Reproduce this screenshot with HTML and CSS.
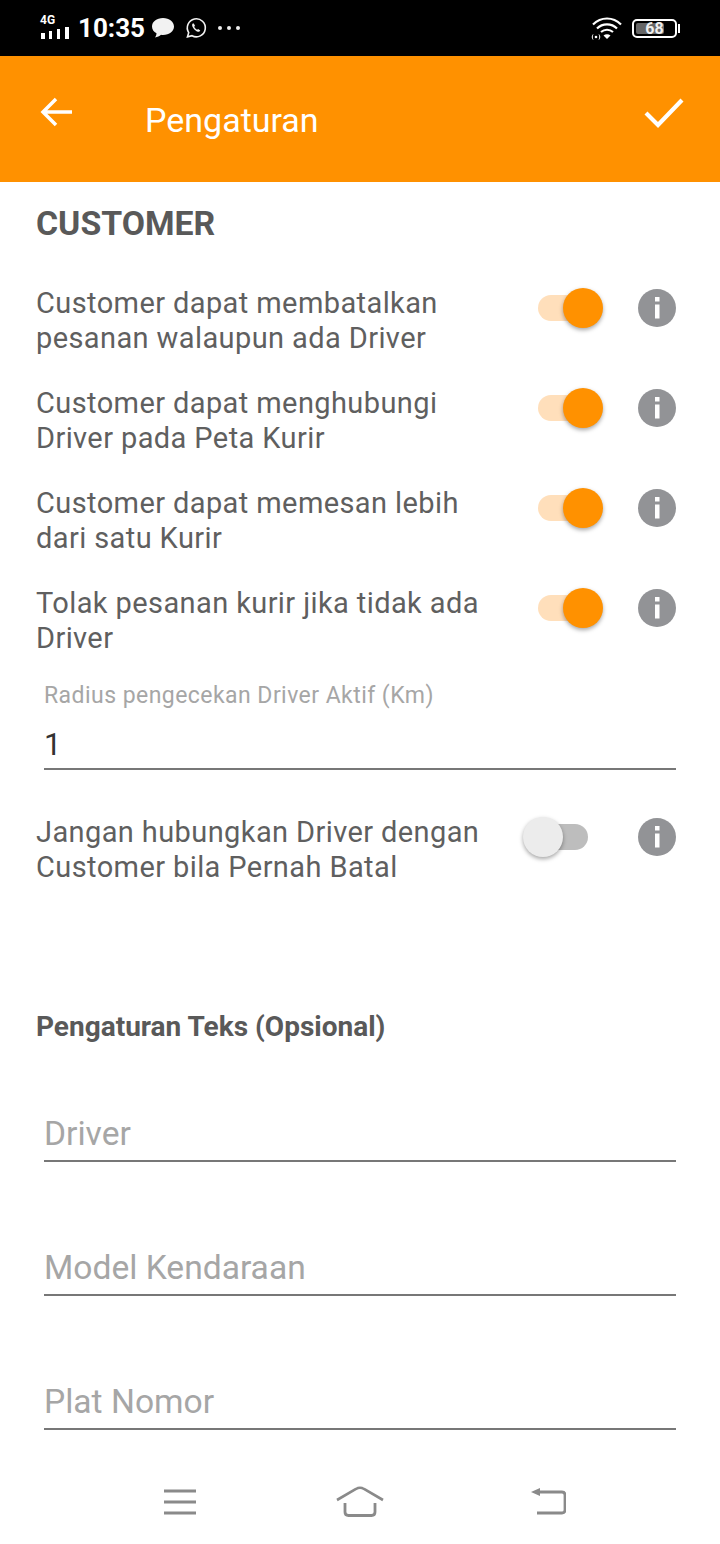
FILE: index.html
```html
<!DOCTYPE html>
<html lang="en">
<head>
    <meta charset="UTF-8">
    <meta name="viewport" content="width=device-width, initial-scale=1.0">
    <title>Pengaturan</title>
    <link rel="stylesheet" href="styles.css">
</head>
<body>
    <div class="status-bar">
        <div class="status-left">
            <div class="signal">
                <span class="signal-label">4G</span>
                <svg width="30" height="14" viewBox="0 0 30 14"><rect x="1" y="7" width="4" height="6" fill="#fff"/><rect x="9" y="5" width="3" height="8" fill="#fff"/><rect x="17" y="3" width="3" height="10" fill="#fff"/><rect x="25" y="1" width="4" height="12" fill="#fff"/></svg>
            </div>
            <span class="clock">10:35</span>
            <svg width="24" height="24" viewBox="0 0 24 24"><path d="M12 2C5.600 2 1 5.600 1 10.500c0 3 1.700 5.300 4.500 6.800 0 1.500-.6 3-1.500 4.200 2.400-.3 4.500-1.300 6-2.700.7.100 1.300.2 2 .2 6.400 0 11-3.800 11-8.500S18.400 2 12 2z" fill="#f2f2f2"/></svg>
            <svg class="wa" width="22" height="22" viewBox="0 0 22 22"><path d="M2.500 19.800l1.200-4.200A9 9 0 1 1 7 18.700z" fill="none" stroke="#f2f2f2" stroke-width="1.600"/><path d="M7.800 6.500c-1 .9-.9 2.400.3 4.300 1.300 2 3 3.500 4.700 3.900 1.100.2 2-.3 2.500-1.300l-2.200-1.400-1 .8c-1.200-.5-2.300-1.700-2.900-3l.8-1-1.200-2.400z" fill="#f2f2f2"/></svg>
            <div class="dots"><i></i><i></i><i></i></div>
        </div>
        <div class="status-right">
            <svg width="34" height="26" viewBox="0 0 34 26"><path d="M3 9.500C11 1.500 23 1.500 31 9.500M7 13.500c5.500-5.500 14.500-5.500 20 0M11 17c3.500-3 8.500-3 12 0" fill="none" stroke="#fff" stroke-width="2.200"/><path d="M13.500 20.500c2-1.600 5-1.600 7 0L17 24z" fill="#fff"/><circle cx="6" cy="22" r="1.300" fill="#fff"/><path d="M3 19.500c-1 1.500-1 3.500 0 5M9 19.500c1 1.500 1 3.500 0 5" fill="none" stroke="#fff" stroke-width="1"/></svg>
            <div class="battery">
                <div class="battery-body"><div class="battery-fill"></div><span class="battery-text">68</span></div>
                <div class="battery-cap"></div>
            </div>
        </div>
    </div>

    <div class="toolbar">
        <svg class="back-icon" width="34" height="34" viewBox="0 0 34 34"><path d="M32 17H3M16 4L3 17l13 13" fill="none" stroke="#fff" stroke-width="3.500"/></svg>
        <h1 class="toolbar-title">Pengaturan</h1>
        <svg class="check-icon" width="40" height="32" viewBox="0 0 40 32"><path d="M2 16l12 12L38 3" fill="none" stroke="#fff" stroke-width="4.200"/></svg>
    </div>

    <div class="content">
        <h2 class="section-title">CUSTOMER</h2>

        <div class="setting-row">
            <div class="setting-text">Customer dapat membatalkan pesanan walaupun ada Driver</div>
            <div class="switch on"><div class="knob"></div></div>
            <div class="info"><svg width="38" height="38" viewBox="0 0 38 38"><circle cx="19" cy="19" r="19" fill="#929396"/><rect x="17" y="8" width="4.500" height="4.500" fill="#fff"/><rect x="17" y="15.500" width="4.500" height="14" fill="#fff"/></svg></div>
        </div>
        <div class="setting-row">
            <div class="setting-text">Customer dapat menghubungi Driver pada Peta Kurir</div>
            <div class="switch on"><div class="knob"></div></div>
            <div class="info"><svg width="38" height="38" viewBox="0 0 38 38"><circle cx="19" cy="19" r="19" fill="#929396"/><rect x="17" y="8" width="4.500" height="4.500" fill="#fff"/><rect x="17" y="15.500" width="4.500" height="14" fill="#fff"/></svg></div>
        </div>
        <div class="setting-row">
            <div class="setting-text">Customer dapat memesan lebih dari satu Kurir</div>
            <div class="switch on"><div class="knob"></div></div>
            <div class="info"><svg width="38" height="38" viewBox="0 0 38 38"><circle cx="19" cy="19" r="19" fill="#929396"/><rect x="17" y="8" width="4.500" height="4.500" fill="#fff"/><rect x="17" y="15.500" width="4.500" height="14" fill="#fff"/></svg></div>
        </div>
        <div class="setting-row last">
            <div class="setting-text">Tolak pesanan kurir jika tidak ada Driver</div>
            <div class="switch on"><div class="knob"></div></div>
            <div class="info"><svg width="38" height="38" viewBox="0 0 38 38"><circle cx="19" cy="19" r="19" fill="#929396"/><rect x="17" y="8" width="4.500" height="4.500" fill="#fff"/><rect x="17" y="15.500" width="4.500" height="14" fill="#fff"/></svg></div>
        </div>

        <div class="radius-field">
            <div class="radius-label">Radius pengecekan Driver Aktif (Km)</div>
            <div class="radius-value">1</div>
        </div>

        <div class="setting-row off-row">
            <div class="setting-text">Jangan hubungkan Driver dengan Customer bila Pernah Batal</div>
            <div class="switch off"><div class="knob"></div></div>
            <div class="info"><svg width="38" height="38" viewBox="0 0 38 38"><circle cx="19" cy="19" r="19" fill="#929396"/><rect x="17" y="8" width="4.500" height="4.500" fill="#fff"/><rect x="17" y="15.500" width="4.500" height="14" fill="#fff"/></svg></div>
        </div>

        <h3 class="sub-title">Pengaturan Teks (Opsional)</h3>

        <div class="text-field">Driver</div>
        <div class="text-field">Model Kendaraan</div>
        <div class="text-field">Plat Nomor</div>
    </div>

    <div class="nav-bar">
        <svg class="nav-menu" width="36" height="30" viewBox="0 0 36 30"><path d="M2 4h32M2 15h32M2 26h32" fill="none" stroke="#8a8a8a" stroke-width="2.800"/></svg>
        <svg class="nav-home" width="50" height="32" viewBox="0 0 50 32"><path d="M2 14L21 3q4-2.500 8 0l19 11" fill="none" stroke="#8a8a8a" stroke-width="2.600"/><path d="M10 17v9q0 3.500 3.500 3.500h23q3.500 0 3.500-3.500v-9" fill="none" stroke="#8a8a8a" stroke-width="2.800"/></svg>
        <svg class="nav-back" width="36" height="30" viewBox="0 0 36 30"><path d="M8 6h24q3 0 3 3v15q0 3-3 3H7" fill="none" stroke="#8a8a8a" stroke-width="2.800"/><path d="M1 6l9-4v8z" fill="#8a8a8a"/></svg>
    </div>
</body>
</html>
```

FILE: styles.css
```css
body {
    margin: 0;
    padding: 0;
    width: 720px;
    height: 1544px;
    overflow: hidden;
    background: #fff;
    font-family: 'Roboto', sans-serif;
    color: #5f5f5f;
    position: relative;
}

.status-bar {
    height: 56px;
    background: #000;
    color: #fff;
    display: flex;
    justify-content: space-between;
    align-items: center;
    padding: 0 40px;
    box-sizing: border-box;
}

.status-left {
    display: flex;
    align-items: center;
}

.signal {
    width: 30px;
    display: flex;
    flex-direction: column;
    margin-top: -2px;
}

.signal-label {
    font-size: 12px;
    font-weight: 700;
    line-height: 11px;
}

.clock {
    font-size: 26px;
    font-weight: 700;
    margin: 0 8px 0 8px;
    width: 65px;
}

.wa {
    margin-left: 10px;
}

.dots {
    display: flex;
    gap: 5px;
    margin-left: 11px;
}

.dots i {
    width: 4px;
    height: 4px;
    border-radius: 50%;
    background: #eee;
}

.status-right {
    display: flex;
    align-items: center;
    gap: 8px;
}

.battery {
    display: flex;
    align-items: center;
}

.battery-body {
    width: 37px;
    height: 11px;
    border: 2px solid #fff;
    border-radius: 5px;
    position: relative;
    padding: 2px;
}

.battery-fill {
    width: 75%;
    height: 100%;
    background: #666;
    border-radius: 2px;
}

.battery-text {
    position: absolute;
    left: 0;
    right: 0;
    top: 0;
    text-align: center;
    font-size: 16px;
    font-weight: 700;
    line-height: 15px;
    color: #eee;
}

.battery-cap {
    width: 2px;
    height: 9px;
    background: #fff;
    margin-left: 1px;
}

.toolbar {
    height: 126px;
    background: #ff9100;
    display: flex;
    align-items: flex-start;
    padding: 0 36px 0 40px;
    box-sizing: border-box;
}

.back-icon {
    margin-top: 39px;
}

.toolbar-title {
    margin: 43px 0 0 71px;
    font-size: 34px;
    font-weight: 400;
    line-height: 42px;
    color: #fff;
    flex: 1;
}

.check-icon {
    margin-top: 41px;
}

.content {
    padding: 0 44px 0 36px;
}

.section-title {
    margin: 22px 0 42px;
    font-size: 33.8px;
    font-weight: 700;
    line-height: 40px;
    color: #595959;
}

.setting-row {
    display: flex;
    align-items: flex-start;
    height: 100px;
}

.setting-row.last {
    height: 96px;
}

.setting-text {
    width: 470px;
    font-size: 29px;
    line-height: 35px;
    letter-spacing: 0.4px;
    flex: none;
}

.switch {
    width: 50px;
    height: 26px;
    border-radius: 13px;
    margin-top: 9px;
    margin-left: 32px;
    position: relative;
    flex: none;
}

.switch.on {
    background: #ffdfbb;
}

.switch.off {
    background: #bdbdbd;
}

.knob {
    width: 40px;
    height: 40px;
    border-radius: 50%;
    position: absolute;
    top: -7px;
    box-shadow: 0 2px 4px rgba(0, 0, 0, 0.35);
}

.switch.on .knob {
    right: -15px;
    background: #ff9100;
}

.switch.off .knob {
    left: -15px;
    background: #ececec;
}

.info {
    margin-left: 50px;
    margin-top: 3px;
    height: 38px;
}

.radius-field {
    margin-left: 8px;
    border-bottom: 2px solid #777;
    height: 88px;
    box-sizing: border-box;
}

.radius-label {
    font-size: 23px;
    line-height: 28px;
    color: #a6a6a6;
    letter-spacing: 0.45px;
}

.radius-value {
    font-size: 31px;
    line-height: 40px;
    color: #333;
    margin-top: 15px;
}

.off-row {
    margin-top: 45px;
}

.sub-title {
    margin: 96px 0 0;
    font-size: 28px;
    font-weight: 700;
    line-height: 32px;
    color: #595959;
}

.text-field {
    margin-left: 8px;
    height: 134px;
    box-sizing: border-box;
    border-bottom: 2px solid #777;
    font-size: 33.6px;
    line-height: 40px;
    color: #a6a6a6;
    padding-top: 86px;
}

.sub-title + .text-field {
    height: 119px;
    padding-top: 71px;
}

.nav-bar {
    position: absolute;
    left: 0;
    right: 0;
    bottom: 0;
    height: 114px;
    background: #fff;
    display: flex;
    align-items: flex-start;
    padding: 56px 0 0 162px;
    box-sizing: border-box;
}

.nav-menu {
    margin-top: 1px;
}

.nav-home {
    margin-left: 137px;
}

.nav-back {
    margin-left: 145px;
}
```
